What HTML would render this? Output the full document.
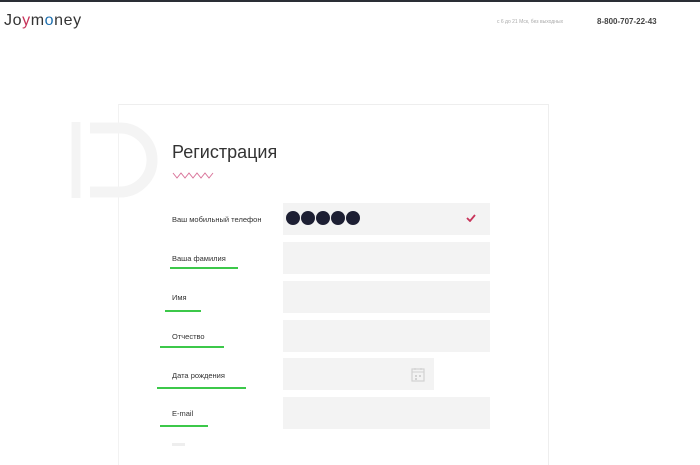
<!DOCTYPE html><html><head><meta charset="utf-8"><style>
body{margin:0;width:700px;height:446px;background:#fff;position:relative;overflow:hidden;font-family:"Liberation Sans",sans-serif}
.a{position:absolute}
.f{position:absolute;background:#f3f3f3;left:283px;width:207px;height:32px}
.l{position:absolute;left:172px;font-size:7.5px;color:#333}
.g{position:absolute;height:2px;background:#3cc84a}
</style></head><body>
<div class="a" style="left:0;top:0;width:700px;height:2px;background:#2a2e35"></div>
<div class="a" style="left:4px;top:12px;font-size:16px;color:#333;letter-spacing:0.6px">Jo<span style="color:#c8345a">y</span>m<span style="color:#1e6fae">o</span>ney</div>
<div class="a" style="left:497px;top:19px;font-size:5px;color:#aaa">с 6 до 21 Мск, без выходных</div>
<div class="a" style="left:597px;top:17px;font-size:8px;color:#444;font-weight:bold">8-800-707-22-43</div>
<div class="a" style="left:118px;top:104px;width:429px;height:360px;border-top:1px solid #eee;border-left:1px solid #f2f2f2;border-right:1px solid #eee"></div>
<svg class="a" style="left:68px;top:120px" width="92" height="80"><path d="M8 2V78" stroke="#f4f4f4" stroke-width="9"/><path d="M22 8H52A32 32 0 0 1 52 72H22" stroke="#f4f4f4" stroke-width="11" fill="none"/></svg>
<div class="a" style="left:172px;top:142px;font-size:18px;color:#333">Регистрация</div>
<svg class="a" style="left:172px;top:171px" width="44" height="9"><path d="M1 2L5 7L9 2L13 7L17 2L21 7L25 2L29 7L33 2L37 7L41 2" stroke="#d9749a" stroke-width="1" fill="none"/></svg>
<div class="l" style="top:215px">Ваш мобильный телефон</div>
<div class="f" style="top:203px"></div>
<div class="a" style="left:286px;top:211px">
<span style="display:inline-block;width:14px;height:14px;border-radius:50%;background:#1d1f33;margin-right:1px"></span><span style="display:inline-block;width:14px;height:14px;border-radius:50%;background:#1d1f33;margin-right:1px"></span><span style="display:inline-block;width:14px;height:14px;border-radius:50%;background:#1d1f33;margin-right:1px"></span><span style="display:inline-block;width:14px;height:14px;border-radius:50%;background:#1d1f33;margin-right:1px"></span><span style="display:inline-block;width:14px;height:14px;border-radius:50%;background:#1d1f33"></span></div>
<svg class="a" style="left:466px;top:214px" width="10" height="8"><path d="M1 4L4 7L9 1" stroke="#c8345a" stroke-width="1.8" fill="none"/></svg>
<div class="l" style="top:254px">Ваша фамилия</div><div class="f" style="top:242px"></div><div class="g" style="left:170px;top:267px;width:68px"></div>
<div class="l" style="top:293px">Имя</div><div class="f" style="top:281px"></div><div class="g" style="left:165px;top:310px;width:36px"></div>
<div class="l" style="top:332px">Отчество</div><div class="f" style="top:320px"></div><div class="g" style="left:160px;top:346px;width:64px"></div>
<div class="l" style="top:371px">Дата рождения</div><div class="f" style="top:358px;width:151px"></div><div class="g" style="left:157px;top:387px;width:89px"></div>
<svg class="a" style="left:411px;top:367px" width="14" height="15"><rect x="1" y="2" width="12" height="12" fill="none" stroke="#d2d2d2" stroke-width="1.2"/><path d="M1 5H13M4 1V3M10 1V3" stroke="#d2d2d2"/><rect x="4" y="8" width="2" height="2" fill="#d2d2d2"/><rect x="4" y="11" width="2" height="2" fill="#d2d2d2"/><rect x="8" y="8" width="2" height="2" fill="#d2d2d2"/></svg>
<div class="l" style="top:409px">E-mail</div><div class="f" style="top:397px"></div><div class="g" style="left:160px;top:425px;width:48px"></div>
<div class="a" style="left:172px;top:443px;width:13px;height:3px;background:#eee"></div>
</body></html>
